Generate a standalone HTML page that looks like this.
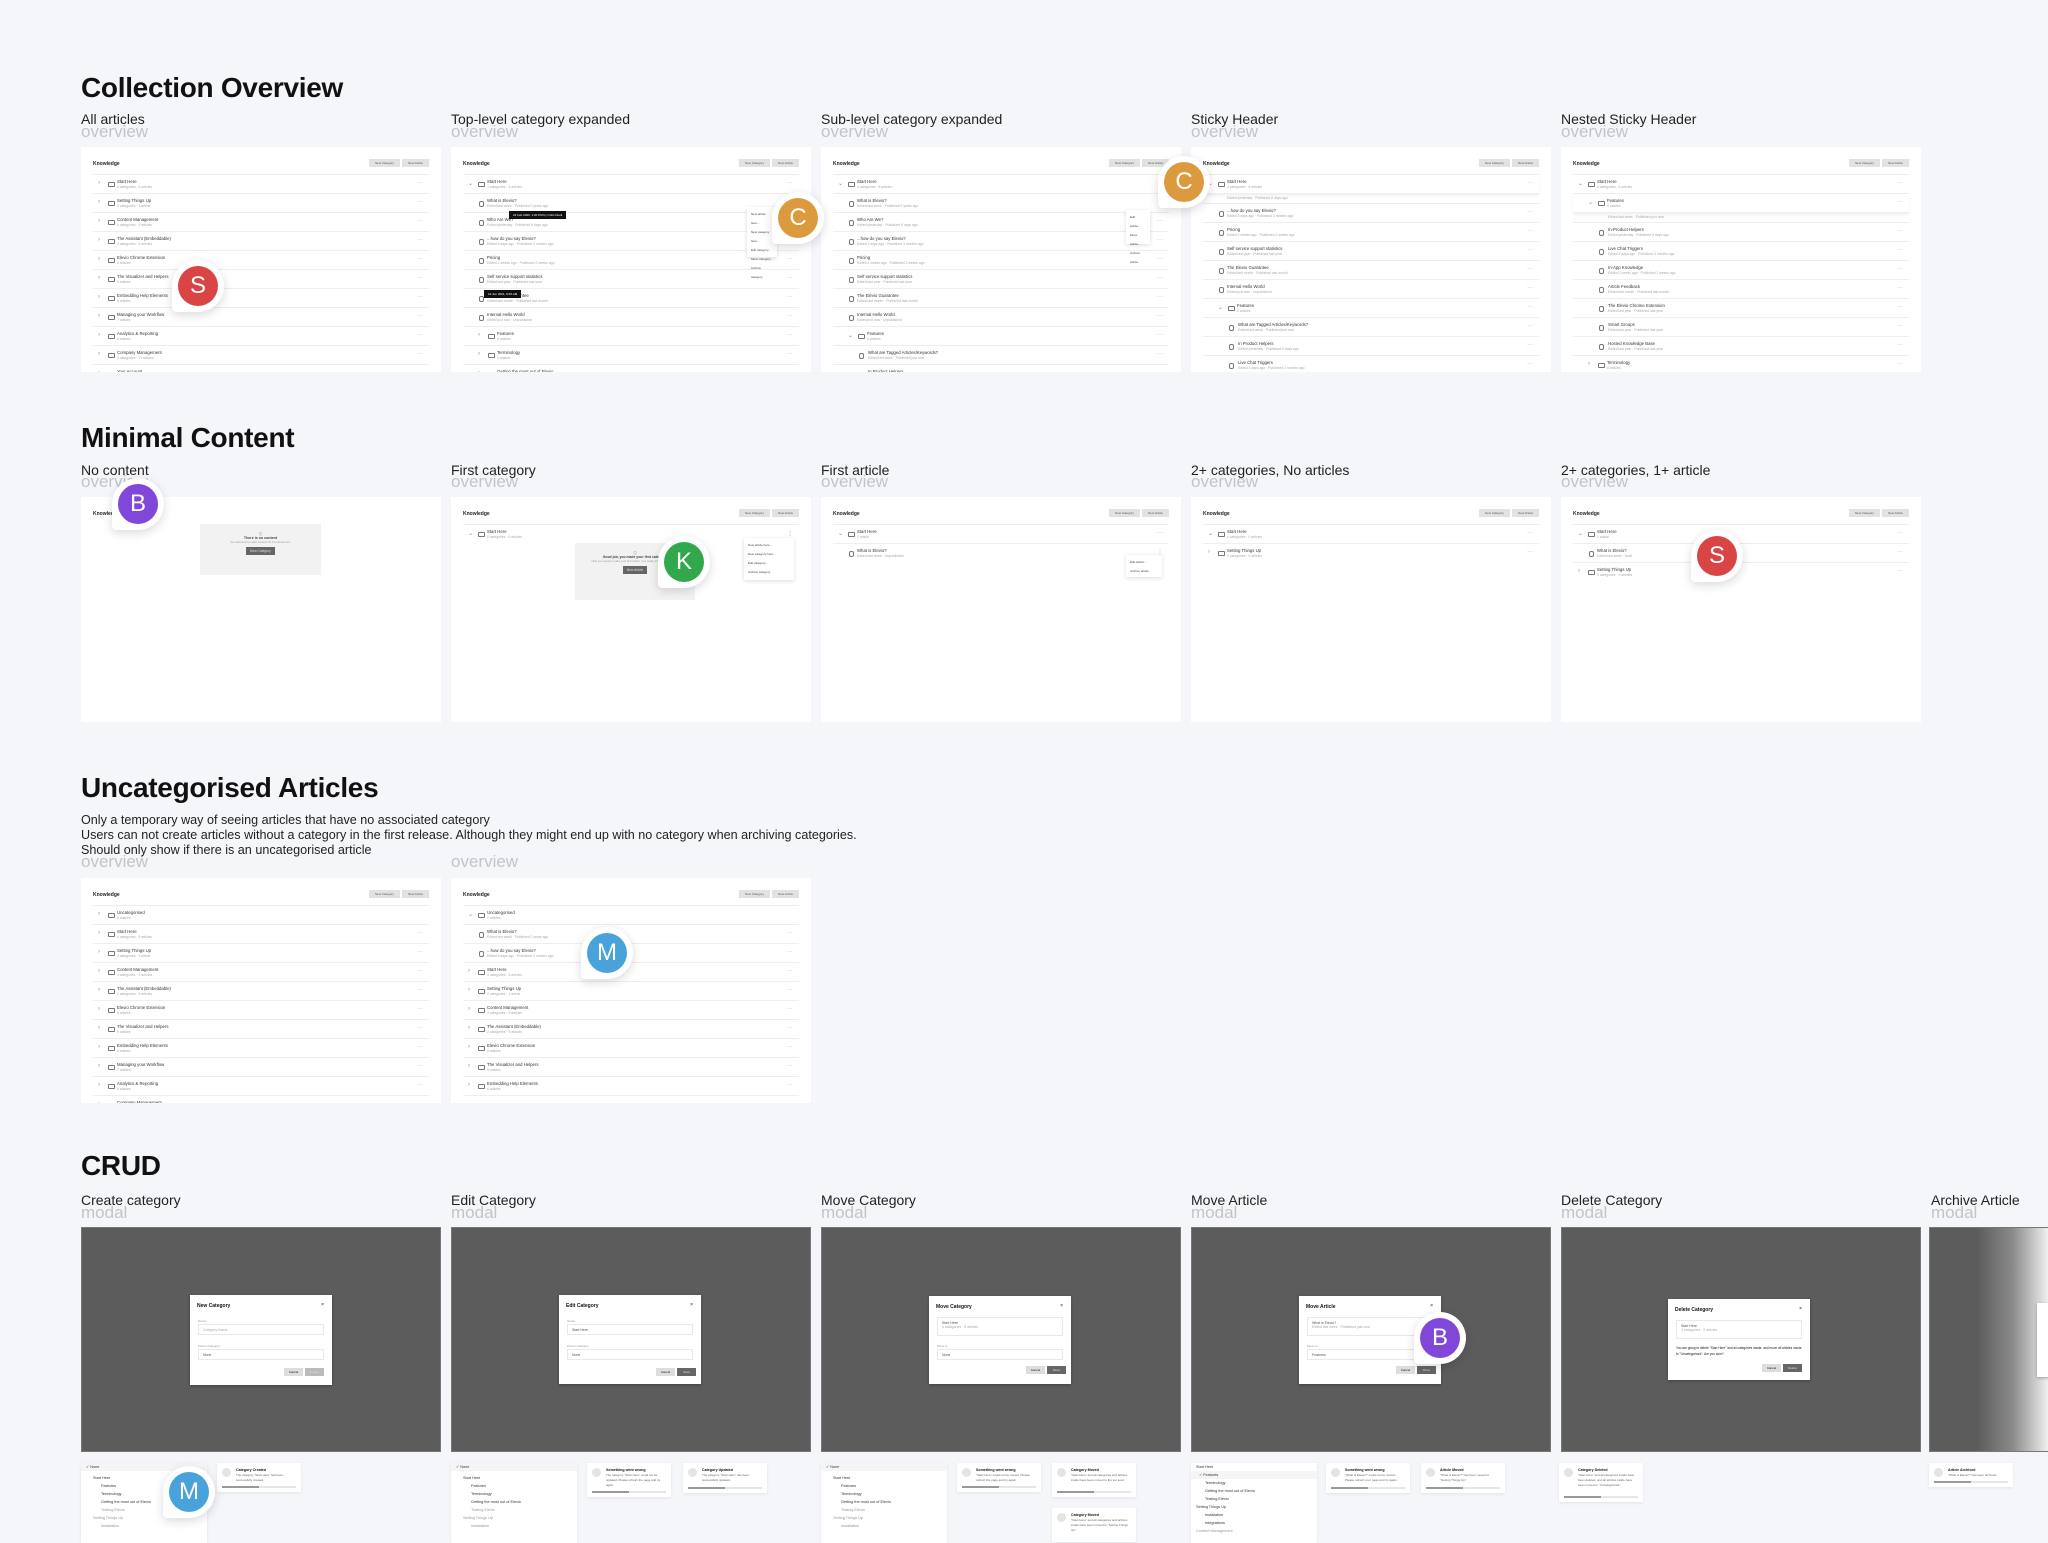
<!DOCTYPE html>
<html><head><meta charset="utf-8"><style>
*{margin:0;padding:0;box-sizing:border-box}
body{width:2048px;height:1536px;background:#f5f6fa;font-family:"Liberation Sans",sans-serif;position:relative;overflow:hidden;color:#111}
.h1{position:absolute;left:81px;font-size:28px;font-weight:bold;letter-spacing:-0.3px;line-height:32px}
.lb{position:absolute;font-size:14px;line-height:14px;color:#222}
.ov{position:absolute;font-size:17px;line-height:17px;color:#c4c4c8}
.desc{position:absolute;left:81px;top:813px;font-size:12.6px;line-height:15px;color:#222}
.f{position:absolute;width:360px;height:225px;background:#fff;overflow:hidden}
.hd{position:absolute;left:12px;top:14px;font-size:5px;font-weight:bold;color:#222}
.bt{position:absolute;top:12px;height:8px;background:#e2e2e2;font-size:3px;color:#555;text-align:center;line-height:8px}
.ls{position:absolute;left:12px;right:12px;top:27px;border-top:1px solid #eee}
.r{height:19px;border-bottom:1px solid #eee;position:relative}
.r .c{position:absolute;left:5px;top:5px;font-size:6px;color:#888}
.r .i{position:absolute;left:15px;top:7px;width:7px;height:5px;border:1px solid #777;border-radius:1px}
.r .t{position:absolute;left:24px;top:4px;font-size:4.3px;color:#333;white-space:nowrap}
.r .m{position:absolute;left:24px;top:10px;font-size:3.4px;color:#aaa;white-space:nowrap}
.r .d{position:absolute;right:6px;top:5px;font-size:6px;color:#aaa}
.r.a .i{left:16px;width:5px;height:6px;border-radius:2px}
.r.s .c{left:15px}.r.s .i{left:25px}.r.s .t,.r.s .m{left:34px}
.r.sa .i{left:26px;width:5px;height:6px;border-radius:2px}.r.sa .t,.r.sa .m{left:35px}
.dk{position:absolute;width:360px;height:225px;background:#5c5c5c;border:1px solid #777}
.md{position:absolute;background:#fff;width:142px;box-shadow:0 1px 3px rgba(0,0,0,.3)}
.md .tt{position:absolute;left:7px;top:8px;font-size:5px;font-weight:bold}
.md .x{position:absolute;right:8px;top:7px;font-size:5px}
.md .fl{position:absolute;left:8px;right:8px;height:11px;border:1px solid #e8e8e8;font-size:3.5px;padding:3px 4px;color:#555}
.md .sl{position:absolute;left:8px;font-size:3px;color:#999}
.md .b1{position:absolute;width:19px;height:8px;background:#ddd;font-size:3px;text-align:center;line-height:8px}
.md .b2{position:absolute;width:19px;height:8px;background:#666;color:#ddd;font-size:3px;text-align:center;line-height:8px}
.card{position:absolute;background:#fff;box-shadow:0 1px 3px rgba(0,0,0,.08)}
.dd{width:126px;height:80px}
.dd div{font-size:3.8px;color:#333;height:8px;line-height:8px;white-space:nowrap}
.ts{width:84px}
.ts .ck{position:absolute;left:5px;top:5px;width:9px;height:9px;border-radius:50%;background:#e4e4e4}
.ts .tt{position:absolute;left:19px;top:5px;font-size:3.6px;font-weight:bold}
.ts .tx{position:absolute;left:19px;top:10px;right:6px;font-size:3px;color:#666;line-height:5px}
.ts .pb{position:absolute;left:5px;right:5px;bottom:4px;height:2px;background:#e6e6e6}
.ts .pb i{display:block;width:50%;height:2px;background:#999}
.av{position:absolute;width:52px;height:52px;border-radius:50% 50% 50% 8%;background:#fff;box-shadow:0 3px 10px rgba(0,0,0,.15)}
.av b{position:absolute;left:6px;top:6px;width:40px;height:40px;border-radius:50%;color:#fff;font-size:24px;font-weight:normal;text-align:center;line-height:40px}
.menu{position:absolute;background:#fff;box-shadow:0 1px 4px rgba(0,0,0,.15);font-size:3px;color:#444;padding:3px 4px;line-height:9px}
.tip{position:absolute;background:#111;color:#fff;font-size:3px;padding:2px 4px}
.es{position:absolute;background:#f2f2f2;text-align:center;font-size:3.3px;color:#444}
.es .eb{display:inline-block;background:#666;color:#ddd;padding:2px 4px;margin-top:3px}
</style></head><body>

<div class="h1" style="top:72px">Collection Overview</div>
<div class="lb" style="left:81px;top:112px">All articles</div><div class="ov" style="left:81px;top:123px">overview</div>
<div class="lb" style="left:451px;top:112px">Top-level category expanded</div><div class="ov" style="left:451px;top:123px">overview</div>
<div class="lb" style="left:821px;top:112px">Sub-level category expanded</div><div class="ov" style="left:821px;top:123px">overview</div>
<div class="lb" style="left:1191px;top:112px">Sticky Header</div><div class="ov" style="left:1191px;top:123px">overview</div>
<div class="lb" style="left:1561px;top:112px">Nested Sticky Header</div><div class="ov" style="left:1561px;top:123px">overview</div>

<!-- Row1 F1 -->
<div class="f" style="left:81px;top:147px"><div class="hd">Knowledge</div><div class="bt" style="left:288px;width:31px">New Category</div><div class="bt" style="left:321px;width:27px">New Article</div>
<div class="ls">
<div class="r"><span class="c">›</span><span class="i"></span><span class="t">Start Here</span><span class="m">4 categories · 6 articles</span><span class="d">···</span></div>
<div class="r"><span class="c">›</span><span class="i"></span><span class="t">Setting Things Up</span><span class="m">2 categories · 1 article</span><span class="d">···</span></div>
<div class="r"><span class="c">›</span><span class="i"></span><span class="t">Content Management</span><span class="m">4 categories · 9 articles</span><span class="d">···</span></div>
<div class="r"><span class="c">›</span><span class="i"></span><span class="t">The Assistant (Embeddable)</span><span class="m">2 categories · 9 articles</span><span class="d">···</span></div>
<div class="r"><span class="c">›</span><span class="i"></span><span class="t">Elevio Chrome Extension</span><span class="m">6 articles</span><span class="d">···</span></div>
<div class="r"><span class="c">›</span><span class="i"></span><span class="t">The Visualizer and Helpers</span><span class="m">9 articles</span><span class="d">···</span></div>
<div class="r"><span class="c">›</span><span class="i"></span><span class="t">Embedding Help Elements</span><span class="m">6 articles</span><span class="d">···</span></div>
<div class="r"><span class="c">›</span><span class="i"></span><span class="t">Managing your Workflow</span><span class="m">7 articles</span><span class="d">···</span></div>
<div class="r"><span class="c">›</span><span class="i"></span><span class="t">Analytics &amp; Reporting</span><span class="m">6 articles</span><span class="d">···</span></div>
<div class="r"><span class="c">›</span><span class="i"></span><span class="t">Company Management</span><span class="m">3 categories · 11 articles</span><span class="d">···</span></div>
<div class="r"><span class="c">›</span><span class="i"></span><span class="t">Your Account</span><span class="m">4 articles</span><span class="d">···</span></div>
</div></div>

<!-- Row1 F2 -->
<div class="f" style="left:451px;top:147px"><div class="hd">Knowledge</div><div class="bt" style="left:288px;width:31px">New Category</div><div class="bt" style="left:321px;width:27px">New Article</div>
<div class="ls">
<div class="r"><span class="c">⌄</span><span class="i"></span><span class="t">Start Here</span><span class="m">4 categories · 6 articles</span><span class="d">···</span></div>
<div class="r a"><span class="i"></span><span class="t">What is Elevio?</span><span class="m">Edited last week · Published 2 years ago</span><span class="d">···</span></div>
<div class="r a"><span class="i"></span><span class="t">Who Are We?</span><span class="m">Edited yesterday · Published 6 days ago</span><span class="d">···</span></div>
<div class="r a"><span class="i"></span><span class="t">...how do you say Elevio?</span><span class="m">Edited 3 days ago · Published 3 months ago</span><span class="d">···</span></div>
<div class="r a"><span class="i"></span><span class="t">Pricing</span><span class="m">Edited 2 weeks ago · Published 2 weeks ago</span><span class="d">···</span></div>
<div class="r a"><span class="i"></span><span class="t">Self service support statistics</span><span class="m">Edited last year · Published last year</span><span class="d">···</span></div>
<div class="r a"><span class="i"></span><span class="t">The Elevio Guarantee</span><span class="m">Edited last month · Published last month</span><span class="d">···</span></div>
<div class="r a"><span class="i"></span><span class="t">Internal Hello World</span><span class="m">Edited just now · Unpublished</span><span class="d">···</span></div>
<div class="r s"><span class="c">›</span><span class="i"></span><span class="t">Features</span><span class="m">6 articles</span><span class="d">···</span></div>
<div class="r s"><span class="c">›</span><span class="i"></span><span class="t">Terminology</span><span class="m">4 articles</span><span class="d">···</span></div>
<div class="r s"><span class="c">›</span><span class="i"></span><span class="t">Getting the most out of Elevio</span><span class="m">3 articles</span><span class="d">···</span></div>
</div>
<div class="tip" style="left:58px;top:64px">24 Feb 2020, 1:20 PM by Chris Duell</div>
<div class="tip" style="left:33px;top:143px">12 Jun 2021, 9:45 AM</div>
<div class="menu" style="left:296px;top:60px;width:30px;height:50px">New article here...<br>New category here...<br>Edit category...<br>Move category...<br>Archive category</div>
</div>

<!-- Row1 F3 -->
<div class="f" style="left:821px;top:147px"><div class="hd">Knowledge</div><div class="bt" style="left:288px;width:31px">New Category</div><div class="bt" style="left:321px;width:27px">New Article</div>
<div class="ls">
<div class="r"><span class="c">⌄</span><span class="i"></span><span class="t">Start Here</span><span class="m">4 categories · 6 articles</span><span class="d">···</span></div>
<div class="r a"><span class="i"></span><span class="t">What is Elevio?</span><span class="m">Edited last week · Published 2 years ago</span><span class="d">···</span></div>
<div class="r a"><span class="i"></span><span class="t">Who Are We?</span><span class="m">Edited yesterday · Published 6 days ago</span><span class="d">···</span></div>
<div class="r a"><span class="i"></span><span class="t">...how do you say Elevio?</span><span class="m">Edited 3 days ago · Published 3 months ago</span><span class="d">···</span></div>
<div class="r a"><span class="i"></span><span class="t">Pricing</span><span class="m">Edited 2 weeks ago · Published 2 weeks ago</span><span class="d">···</span></div>
<div class="r a"><span class="i"></span><span class="t">Self service support statistics</span><span class="m">Edited last year · Published last year</span><span class="d">···</span></div>
<div class="r a"><span class="i"></span><span class="t">The Elevio Guarantee</span><span class="m">Edited last month · Published last month</span><span class="d">···</span></div>
<div class="r a"><span class="i"></span><span class="t">Internal Hello World</span><span class="m">Edited just now · Unpublished</span><span class="d">···</span></div>
<div class="r s"><span class="c">⌄</span><span class="i"></span><span class="t">Features</span><span class="m">6 articles</span><span class="d">···</span></div>
<div class="r sa"><span class="i"></span><span class="t">What are Tagged Articles/Keywords?</span><span class="m">Edited last week · Published just now</span><span class="d">···</span></div>
<div class="r sa"><span class="i"></span><span class="t">In Product Helpers</span><span class="m">Edited yesterday</span><span class="d">···</span></div>
</div>
<div class="menu" style="left:305px;top:63px;width:24px;height:34px">Edit article...<br>Move article...<br>Archive article</div>
</div>

<!-- Row1 F4 -->
<div class="f" style="left:1191px;top:147px"><div class="hd">Knowledge</div><div class="bt" style="left:288px;width:31px">New Category</div><div class="bt" style="left:321px;width:27px">New Article</div>
<div class="ls">
<div class="r" style="box-shadow:0 2px 3px rgba(0,0,0,.06)"><span class="c">⌄</span><span class="i"></span><span class="t">Start Here</span><span class="m">4 categories · 6 articles</span><span class="d">···</span></div>
<div class="r a" style="height:10px"><span class="m" style="top:2px">Edited yesterday · Published 6 days ago</span></div>
<div class="r a"><span class="i"></span><span class="t">...how do you say Elevio?</span><span class="m">Edited 3 days ago · Published 3 months ago</span><span class="d">···</span></div>
<div class="r a"><span class="i"></span><span class="t">Pricing</span><span class="m">Edited 2 weeks ago · Published 2 weeks ago</span><span class="d">···</span></div>
<div class="r a"><span class="i"></span><span class="t">Self service support statistics</span><span class="m">Edited last year · Published last year</span><span class="d">···</span></div>
<div class="r a"><span class="i"></span><span class="t">The Elevio Guarantee</span><span class="m">Edited last month · Published last month</span><span class="d">···</span></div>
<div class="r a"><span class="i"></span><span class="t">Internal Hello World</span><span class="m">Edited just now · Unpublished</span><span class="d">···</span></div>
<div class="r s"><span class="c">⌄</span><span class="i"></span><span class="t">Features</span><span class="m">6 articles</span><span class="d">···</span></div>
<div class="r sa"><span class="i"></span><span class="t">What are Tagged Articles/Keywords?</span><span class="m">Edited last week · Published just now</span><span class="d">···</span></div>
<div class="r sa"><span class="i"></span><span class="t">In Product Helpers</span><span class="m">Edited yesterday · Published 6 days ago</span><span class="d">···</span></div>
<div class="r sa"><span class="i"></span><span class="t">Live Chat Triggers</span><span class="m">Edited 3 days ago · Published 3 months ago</span><span class="d">···</span></div>
</div></div>

<!-- Row1 F5 -->
<div class="f" style="left:1561px;top:147px"><div class="hd">Knowledge</div><div class="bt" style="left:288px;width:31px">New Category</div><div class="bt" style="left:321px;width:27px">New Article</div>
<div class="ls">
<div class="r"><span class="c">⌄</span><span class="i"></span><span class="t">Start Here</span><span class="m">4 categories · 6 articles</span><span class="d">···</span></div>
<div class="r s" style="box-shadow:0 2px 3px rgba(0,0,0,.06)"><span class="c">⌄</span><span class="i"></span><span class="t">Features</span><span class="m">8 articles</span><span class="d">···</span></div>
<div class="r sa" style="height:10px"><span class="m" style="top:2px">Edited last week · Published just now</span></div>
<div class="r sa"><span class="i"></span><span class="t">In-Product Helpers</span><span class="m">Edited yesterday · Published 6 days ago</span><span class="d">···</span></div>
<div class="r sa"><span class="i"></span><span class="t">Live Chat Triggers</span><span class="m">Edited 3 days ago · Published 3 months ago</span><span class="d">···</span></div>
<div class="r sa"><span class="i"></span><span class="t">In-App Knowledge</span><span class="m">Edited 2 weeks ago · Published 2 weeks ago</span><span class="d">···</span></div>
<div class="r sa"><span class="i"></span><span class="t">Article Feedback</span><span class="m">Edited last month · Published last month</span><span class="d">···</span></div>
<div class="r sa"><span class="i"></span><span class="t">The Elevio Chrome Extension</span><span class="m">Edited last year · Published last year</span><span class="d">···</span></div>
<div class="r sa"><span class="i"></span><span class="t">Smart Groups</span><span class="m">Edited last year · Published last year</span><span class="d">···</span></div>
<div class="r sa"><span class="i"></span><span class="t">Hosted Knowledge Base</span><span class="m">Edited last year · Published last year</span><span class="d">···</span></div>
<div class="r s"><span class="c">›</span><span class="i"></span><span class="t">Terminology</span><span class="m">6 articles</span><span class="d">···</span></div>
</div></div>

<!-- Row 2 -->
<div class="h1" style="top:422px">Minimal Content</div>
<div class="lb" style="left:81px;top:463px">No content</div><div class="ov" style="left:81px;top:473px">overview</div>
<div class="lb" style="left:451px;top:463px">First category</div><div class="ov" style="left:451px;top:473px">overview</div>
<div class="lb" style="left:821px;top:463px">First article</div><div class="ov" style="left:821px;top:473px">overview</div>
<div class="lb" style="left:1191px;top:463px">2+ categories, No articles</div><div class="ov" style="left:1191px;top:473px">overview</div>
<div class="lb" style="left:1561px;top:463px">2+ categories, 1+ article</div><div class="ov" style="left:1561px;top:473px">overview</div>

<div class="f" style="left:81px;top:497px"><div class="hd">Knowledge</div>
<div class="es" style="left:119px;top:27px;width:121px;height:51px;padding-top:7px">ⓘ<br><b style="font-size:3.6px">There is no content</b><br><span style="color:#999;font-size:2.8px">You will need to make content for it to show here.</span><br><span class="eb">New Category</span></div></div>

<div class="f" style="left:451px;top:497px"><div class="hd">Knowledge</div><div class="bt" style="left:288px;width:31px">New Category</div><div class="bt" style="left:321px;width:27px">New Article</div>
<div class="ls"><div class="r" style="border:0"><span class="c">⌄</span><span class="i"></span><span class="t">Start Here</span><span class="m">0 categories · 0 articles</span><span class="d">⋮</span></div></div>
<div class="es" style="left:124px;top:46px;width:120px;height:57px;padding-top:7px">ⓘ<br><b style="font-size:3.4px">Good job, you made your first category!</b><br><span style="color:#999;font-size:2.8px">Now you need to make your first article. Get ready, it's going to be fun!</span><br><span class="eb">New Article</span></div>
<div class="menu" style="left:293px;top:41px;width:50px;height:42px">New article here...<br>New category here...<br>Edit category...<br>Archive category</div></div>

<div class="f" style="left:821px;top:497px"><div class="hd">Knowledge</div><div class="bt" style="left:288px;width:31px">New Category</div><div class="bt" style="left:321px;width:27px">New Article</div>
<div class="ls"><div class="r"><span class="c">⌄</span><span class="i"></span><span class="t">Start Here</span><span class="m">1 article</span><span class="d">···</span></div>
<div class="r a" style="border:0"><span class="i"></span><span class="t">What is Elevio?</span><span class="m">Edited last week · Unpublished</span><span class="d">⋮</span></div></div>
<div class="menu" style="left:305px;top:58px;width:36px;height:22px">Edit article...<br>Archive article</div></div>

<div class="f" style="left:1191px;top:497px"><div class="hd">Knowledge</div><div class="bt" style="left:288px;width:31px">New Category</div><div class="bt" style="left:321px;width:27px">New Article</div>
<div class="ls"><div class="r"><span class="c">⌄</span><span class="i"></span><span class="t">Start Here</span><span class="m">0 categories · 0 articles</span><span class="d">···</span></div>
<div class="r" style="border:0"><span class="c">›</span><span class="i"></span><span class="t">Setting Things Up</span><span class="m">0 categories · 0 articles</span><span class="d">···</span></div></div></div>

<div class="f" style="left:1561px;top:497px"><div class="hd">Knowledge</div><div class="bt" style="left:288px;width:31px">New Category</div><div class="bt" style="left:321px;width:27px">New Article</div>
<div class="ls"><div class="r"><span class="c">⌄</span><span class="i"></span><span class="t">Start Here</span><span class="m">1 article</span><span class="d">···</span></div>
<div class="r a"><span class="i"></span><span class="t">What is Elevio?</span><span class="m">Edited last week · Draft</span><span class="d">···</span></div>
<div class="r" style="border:0"><span class="c">›</span><span class="i"></span><span class="t">Setting Things Up</span><span class="m">0 categories · 0 articles</span><span class="d">···</span></div></div></div>

<!-- Row 3 -->
<div class="h1" style="top:772px">Uncategorised Articles</div>
<div class="desc">Only a temporary way of seeing articles that have no associated category<br>Users can not create articles without a category in the first release. Although they might end up with no category when archiving categories.<br>Should only show if there is an uncategorised article</div>
<div class="ov" style="left:81px;top:853px">overview</div><div class="ov" style="left:451px;top:853px">overview</div>

<div class="f" style="left:81px;top:878px"><div class="hd">Knowledge</div><div class="bt" style="left:288px;width:31px">New Category</div><div class="bt" style="left:321px;width:27px">New Article</div>
<div class="ls">
<div class="r"><span class="c">›</span><span class="i"></span><span class="t">Uncategorised</span><span class="m">2 articles</span></div>
<div class="r"><span class="c">›</span><span class="i"></span><span class="t">Start Here</span><span class="m">4 categories · 6 articles</span><span class="d">···</span></div>
<div class="r"><span class="c">›</span><span class="i"></span><span class="t">Setting Things Up</span><span class="m">2 categories · 1 article</span><span class="d">···</span></div>
<div class="r"><span class="c">›</span><span class="i"></span><span class="t">Content Management</span><span class="m">4 categories · 9 articles</span><span class="d">···</span></div>
<div class="r"><span class="c">›</span><span class="i"></span><span class="t">The Assistant (Embeddable)</span><span class="m">2 categories · 9 articles</span><span class="d">···</span></div>
<div class="r"><span class="c">›</span><span class="i"></span><span class="t">Elevio Chrome Extension</span><span class="m">6 articles</span><span class="d">···</span></div>
<div class="r"><span class="c">›</span><span class="i"></span><span class="t">The Visualizer and Helpers</span><span class="m">9 articles</span><span class="d">···</span></div>
<div class="r"><span class="c">›</span><span class="i"></span><span class="t">Embedding Help Elements</span><span class="m">6 articles</span><span class="d">···</span></div>
<div class="r"><span class="c">›</span><span class="i"></span><span class="t">Managing your Workflow</span><span class="m">7 articles</span><span class="d">···</span></div>
<div class="r"><span class="c">›</span><span class="i"></span><span class="t">Analytics &amp; Reporting</span><span class="m">6 articles</span><span class="d">···</span></div>
<div class="r"><span class="c">›</span><span class="i"></span><span class="t">Company Management</span><span class="m">3 categories</span><span class="d">···</span></div>
</div></div>

<div class="f" style="left:451px;top:878px"><div class="hd">Knowledge</div><div class="bt" style="left:288px;width:31px">New Category</div><div class="bt" style="left:321px;width:27px">New Article</div>
<div class="ls">
<div class="r"><span class="c">⌄</span><span class="i"></span><span class="t">Uncategorised</span><span class="m">2 articles</span></div>
<div class="r a"><span class="i"></span><span class="t">What is Elevio?</span><span class="m">Edited last week · Published 2 years ago</span><span class="d">···</span></div>
<div class="r a"><span class="i"></span><span class="t">...how do you say Elevio?</span><span class="m">Edited 3 days ago · Published 3 months ago</span><span class="d">···</span></div>
<div class="r"><span class="c">›</span><span class="i"></span><span class="t">Start Here</span><span class="m">4 categories · 6 articles</span><span class="d">···</span></div>
<div class="r"><span class="c">›</span><span class="i"></span><span class="t">Setting Things Up</span><span class="m">2 categories · 1 article</span><span class="d">···</span></div>
<div class="r"><span class="c">›</span><span class="i"></span><span class="t">Content Management</span><span class="m">4 categories · 9 articles</span><span class="d">···</span></div>
<div class="r"><span class="c">›</span><span class="i"></span><span class="t">The Assistant (Embeddable)</span><span class="m">2 categories · 9 articles</span><span class="d">···</span></div>
<div class="r"><span class="c">›</span><span class="i"></span><span class="t">Elevio Chrome Extension</span><span class="m">6 articles</span><span class="d">···</span></div>
<div class="r"><span class="c">›</span><span class="i"></span><span class="t">The Visualizer and Helpers</span><span class="m">9 articles</span><span class="d">···</span></div>
<div class="r"><span class="c">›</span><span class="i"></span><span class="t">Embedding Help Elements</span><span class="m">6 articles</span><span class="d">···</span></div>
</div></div>

<!-- Row 4 CRUD -->
<div class="h1" style="top:1150px">CRUD</div>
<div class="lb" style="left:81px;top:1193px">Create category</div><div class="ov" style="left:81px;top:1204px">modal</div>
<div class="lb" style="left:451px;top:1193px">Edit Category</div><div class="ov" style="left:451px;top:1204px">modal</div>
<div class="lb" style="left:821px;top:1193px">Move Category</div><div class="ov" style="left:821px;top:1204px">modal</div>
<div class="lb" style="left:1191px;top:1193px">Move Article</div><div class="ov" style="left:1191px;top:1204px">modal</div>
<div class="lb" style="left:1561px;top:1193px">Delete Category</div><div class="ov" style="left:1561px;top:1204px">modal</div>
<div class="lb" style="left:1931px;top:1193px">Archive Article</div><div class="ov" style="left:1931px;top:1204px">modal</div>

<div class="dk" style="left:81px;top:1227px"></div>
<div class="md" style="left:190px;top:1295px;height:90px"><span class="tt">New Category</span><span class="x">×</span><span class="sl" style="top:24px">Name</span><div class="fl" style="top:29px;color:#aaa">Category Name</div><span class="sl" style="top:49px">Parent Category</span><div class="fl" style="top:54px">None</div><span class="b1" style="left:94px;top:73px">Cancel</span><span class="b2" style="left:115px;top:73px;background:#bbb">Create</span></div>

<div class="dk" style="left:451px;top:1227px"></div>
<div class="md" style="left:559px;top:1295px;height:89px"><span class="tt">Edit Category</span><span class="x">×</span><span class="sl" style="top:24px">Name</span><div class="fl" style="top:29px">Start Here</div><span class="sl" style="top:49px">Parent Category</span><div class="fl" style="top:54px">None</div><span class="b1" style="left:97px;top:73px">Cancel</span><span class="b2" style="left:118px;top:73px">Save</span></div>

<div class="dk" style="left:821px;top:1227px"></div>
<div class="md" style="left:929px;top:1296px;height:88px"><span class="tt">Move Category</span><span class="x">×</span><div class="fl" style="top:21px;height:19px">Start Here<br><span style="color:#aaa">4 categories · 6 articles</span></div><span class="sl" style="top:48px">Move to</span><div class="fl" style="top:53px">None</div><span class="b1" style="left:97px;top:70px">Cancel</span><span class="b2" style="left:118px;top:70px">Move</span></div>

<div class="dk" style="left:1191px;top:1227px"></div>
<div class="md" style="left:1299px;top:1296px;height:88px"><span class="tt">Move Article</span><span class="x">×</span><div class="fl" style="top:21px;height:19px">What is Elevio?<br><span style="color:#aaa">Edited last week · Published just now</span></div><span class="sl" style="top:48px">Move to</span><div class="fl" style="top:53px">Features</div><span class="b1" style="left:97px;top:70px">Cancel</span><span class="b2" style="left:118px;top:70px">Move</span></div>

<div class="dk" style="left:1561px;top:1227px"></div>
<div class="md" style="left:1668px;top:1299px;height:81px"><span class="tt">Delete Category</span><span class="x">×</span><div class="fl" style="top:21px;height:19px">Start Here<br><span style="color:#aaa">4 categories · 5 articles</span></div><div style="position:absolute;left:8px;right:8px;top:47px;font-size:3.2px;line-height:5.5px">You are going to delete "Start Here" and all categories inside, and move all articles inside to "Uncategorised". Are you sure?</div><span class="b1" style="left:94px;top:65px">Cancel</span><span class="b2" style="left:115px;top:65px">Delete</span></div>

<div class="dk" style="left:1929px;top:1227px;width:119px;border-right:0;background:linear-gradient(90deg,#5c5c5c 0%,#5c5c5c 40%,#8a8a8a 70%,#f0f0f0 100%)"></div>
<div class="md" style="left:2037px;top:1303px;width:20px;height:74px"></div>

<!-- bottom cards -->
<div class="card dd" style="left:81px;top:1463px"><div style="background:#f5f5f5;padding-left:5px">✓ None</div><div style="padding-left:12px;margin-top:3px">Start Here</div><div style="padding-left:20px">Features</div><div style="padding-left:20px">Terminology</div><div style="padding-left:20px">Getting the most out of Elevio</div><div style="padding-left:20px;color:#999">Trialing Elevio</div><div style="padding-left:12px;color:#999">Setting Things Up</div><div style="padding-left:20px;color:#999">Installation</div></div>
<div class="card ts" style="left:217px;top:1463px;height:29px"><span class="ck"></span><span class="tt">Category Created</span><span class="tx">The category "Start Here" has been successfully created.</span><span class="pb"><i></i></span></div>

<div class="card dd" style="left:451px;top:1463px"><div style="background:#f5f5f5;padding-left:5px">✓ None</div><div style="padding-left:12px;margin-top:3px">Start Here</div><div style="padding-left:20px">Features</div><div style="padding-left:20px">Terminology</div><div style="padding-left:20px">Getting the most out of Elevio</div><div style="padding-left:20px;color:#999">Trialing Elevio</div><div style="padding-left:12px;color:#999">Setting Things Up</div><div style="padding-left:20px;color:#999">Installation</div></div>
<div class="card ts" style="left:587px;top:1463px;height:34px"><span class="ck"></span><span class="tt">Something went wrong</span><span class="tx">The category "Start Here" could not be updated. Please refresh the page and try again</span><span class="pb"><i></i></span></div>
<div class="card ts" style="left:683px;top:1463px;height:30px"><span class="ck"></span><span class="tt">Category Updated</span><span class="tx">The category "Start Here" has been successfully updated.</span><span class="pb"><i></i></span></div>

<div class="card dd" style="left:821px;top:1463px"><div style="background:#f5f5f5;padding-left:5px">✓ None</div><div style="padding-left:12px;margin-top:3px">Start Here</div><div style="padding-left:20px">Features</div><div style="padding-left:20px">Terminology</div><div style="padding-left:20px">Getting the most out of Elevio</div><div style="padding-left:20px;color:#999">Trialing Elevio</div><div style="padding-left:12px;color:#999">Setting Things Up</div><div style="padding-left:20px;color:#999">Installation</div></div>
<div class="card ts" style="left:957px;top:1463px;height:29px"><span class="ck"></span><span class="tt">Something went wrong</span><span class="tx">"Start Here" could not be moved. Please refresh the page and try again</span><span class="pb"><i></i></span></div>
<div class="card ts" style="left:1052px;top:1463px;height:34px"><span class="ck"></span><span class="tt">Category Moved</span><span class="tx">"Start Here" and all categories and articles inside have been moved to the top level.</span><span class="pb"><i></i></span></div>
<div class="card ts" style="left:1052px;top:1508px;height:34px"><span class="ck"></span><span class="tt">Category Moved</span><span class="tx">"Start Here" and all categories and articles inside have been moved to "Setting Things Up".</span></div>

<div class="card dd" style="left:1191px;top:1463px"><div style="padding-left:5px">Start Here</div><div style="background:#f5f5f5;padding-left:8px">✓ Features</div><div style="padding-left:14px">Terminology</div><div style="padding-left:14px">Getting the most out of Elevio</div><div style="padding-left:14px">Trialing Elevio</div><div style="padding-left:5px">Setting Things Up</div><div style="padding-left:14px">Installation</div><div style="padding-left:14px">Integrations</div><div style="padding-left:5px;color:#999">Content Management</div></div>
<div class="card ts" style="left:1326px;top:1463px;height:30px"><span class="ck"></span><span class="tt">Something went wrong</span><span class="tx">"What is Elevio?" could not be moved. Please refresh your page and try again.</span><span class="pb"><i></i></span></div>
<div class="card ts" style="left:1421px;top:1463px;height:30px"><span class="ck"></span><span class="tt">Article Moved</span><span class="tx">"What is Elevio?" has been moved to "Setting Things Up".</span><span class="pb"><i></i></span></div>

<div class="card ts" style="left:1559px;top:1463px;height:39px"><span class="ck"></span><span class="tt">Category Deleted</span><span class="tx">"Start Here" and all categories inside have been deleted, and all articles inside have been moved to "Uncategorised".</span><span class="pb"><i></i></span></div>
<div class="card ts" style="left:1929px;top:1463px;height:24px"><span class="ck"></span><span class="tt">Article Archived</span><span class="tx">"What is Elevio?" has been archived.</span><span class="pb"><i></i></span></div>

<!-- avatars -->
<div class="av" style="left:172px;top:260px"><b style="background:#d94545">S</b></div>
<div class="av" style="left:772px;top:192px"><b style="background:#dc9a3e">C</b></div>
<div class="av" style="left:1158px;top:156px"><b style="background:#dc9a3e">C</b></div>
<div class="av" style="left:112px;top:478px"><b style="background:#8047d8">B</b></div>
<div class="av" style="left:658px;top:536px"><b style="background:#30a84b">K</b></div>
<div class="av" style="left:1691px;top:530px"><b style="background:#d94545">S</b></div>
<div class="av" style="left:581px;top:927px"><b style="background:#4aa2da">M</b></div>
<div class="av" style="left:1414px;top:1312px"><b style="background:#8047d8">B</b></div>
<div class="av" style="left:163px;top:1466px"><b style="background:#4aa2da">M</b></div>
</body></html>
